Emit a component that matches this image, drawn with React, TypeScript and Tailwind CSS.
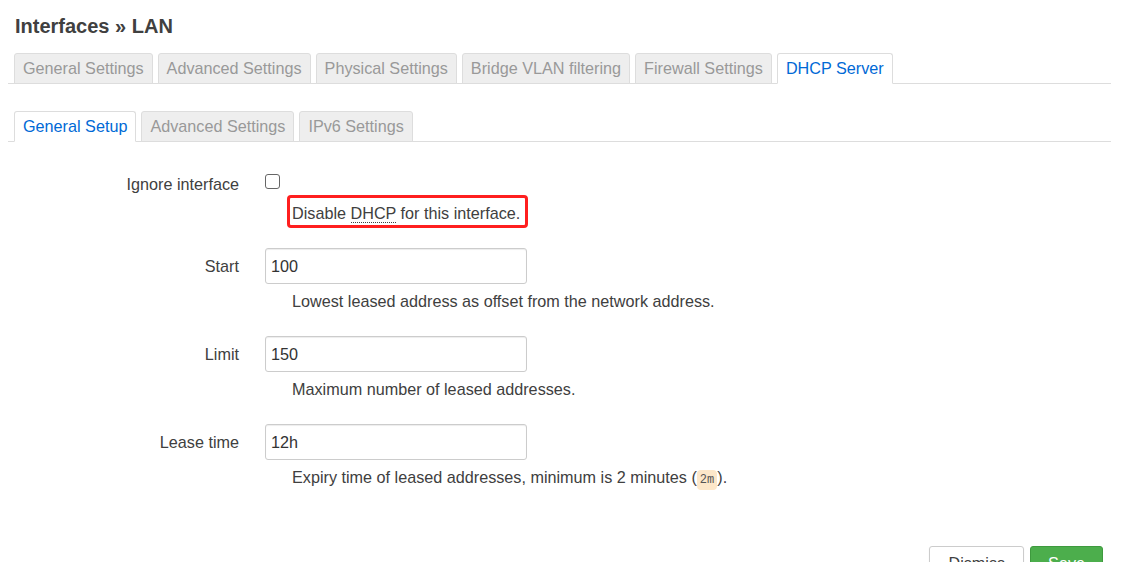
import clsx from 'clsx';

const font = { fontFamily: '"Liberation Sans", Arial, sans-serif' };

const topTabs = [
  'General Settings',
  'Advanced Settings',
  'Physical Settings',
  'Bridge VLAN filtering',
  'Firewall Settings',
  'DHCP Server',
];

const innerTabs = ['General Setup', 'Advanced Settings', 'IPv6 Settings'];

const Tabs = ({ items, active }: { items: string[]; active: string }) => (
  <ul className="flex gap-[5px] pl-[6px] border-b border-[#ddd]">
    {items.map((t) => (
      <li
        key={t}
        className={clsx(
          '-mb-px border rounded-t-[3px] px-[8px] py-[4px] leading-[21px]',
          t === active
            ? 'bg-white border-[#ddd] border-b-white text-[#0069d6]'
            : 'bg-[#eee] border-[#ddd] text-[#999]'
        )}
      >
        {t}
      </li>
    ))}
  </ul>
);

const Field = ({
  label,
  value,
  desc,
  first,
}: {
  label: string;
  value: string;
  desc: React.ReactNode;
  first?: boolean;
}) => (
  <div className={clsx('flex', first ? 'mt-[23px]' : 'mt-[25px]')}>
    <div className="w-[231px] text-right leading-[20px] pt-[8px]">{label}</div>
    <div className="ml-[26px]">
      <div className="w-[262px] h-[36px] border border-[#ccc] rounded-[3px] shadow-[inset_0_1px_1px_rgba(0,0,0,0.075)] px-[5px] flex items-center text-[#333]">
        {value}
      </div>
      <div className="mt-[7px] ml-[27px] leading-[20px] whitespace-nowrap">{desc}</div>
    </div>
  </div>
);

export default function App() {
  return (
    <div className="bg-white w-[1121px] h-[562px] overflow-hidden text-[16.2px] text-[#404040]" style={font}>
      <div className="ml-[8px] mr-[10px]">
        <h2 className="pt-[15px] pl-[7px] text-[20px] leading-[22px] font-bold text-[#404040]">
          Interfaces » LAN
        </h2>
        <div className="mt-[16px]">
          <Tabs items={topTabs} active="DHCP Server" />
        </div>
        <div className="mt-[27px]">
          <Tabs items={innerTabs} active="General Setup" />
        </div>

        <div className="flex mt-[32px]">
          <div className="w-[231px] text-right leading-[20px]">Ignore interface</div>
          <div className="ml-[26px]">
            <div className="h-[20px]">
              <span className="block w-[15px] h-[15px] border border-[#666] rounded-[3px] bg-white" />
            </div>
            <div className="mt-[9px] ml-[27px] leading-[20px] relative inline-block whitespace-nowrap">
              <span className="absolute -left-[5px] -right-[8px] -top-[8px] -bottom-[5px] border-[3px] border-[#ff1f1f] rounded-[4px]" />
              Disable{' '}
              <abbr className="no-underline border-b border-dotted border-[#404040]" title="Dynamic Host Configuration Protocol">
                DHCP
              </abbr>{' '}
              for this interface.
            </div>
          </div>
        </div>

        <Field first label="Start" value="100" desc="Lowest leased address as offset from the network address." />
        <Field label="Limit" value="150" desc="Maximum number of leased addresses." />
        <Field
          label="Lease time"
          value="12h"
          desc={
            <>
              Expiry time of leased addresses, minimum is 2 minutes (
              <code
                className="bg-[#fde7c9] rounded-[4px] px-[3px] py-[3px] text-[12px] text-[#555]"
                style={{ fontFamily: '"Liberation Mono", "DejaVu Sans Mono", monospace' }}
              >
                2m
              </code>
              ).
            </>
          }
        />

        <div className="flex justify-end gap-[6px] mt-[56px] mr-[8px]">
          <button className="h-[34px] px-[18px] border border-[#ccc] rounded-[3px] bg-white text-[#404040] shadow-[0_1px_2px_rgba(0,0,0,0.05)]">
            Dismiss
          </button>
          <button className="h-[34px] px-[17px] border border-[#3e9a3e] rounded-[3px] bg-[#4cae4c] text-white">
            Save
          </button>
        </div>
      </div>
    </div>
  );
}
